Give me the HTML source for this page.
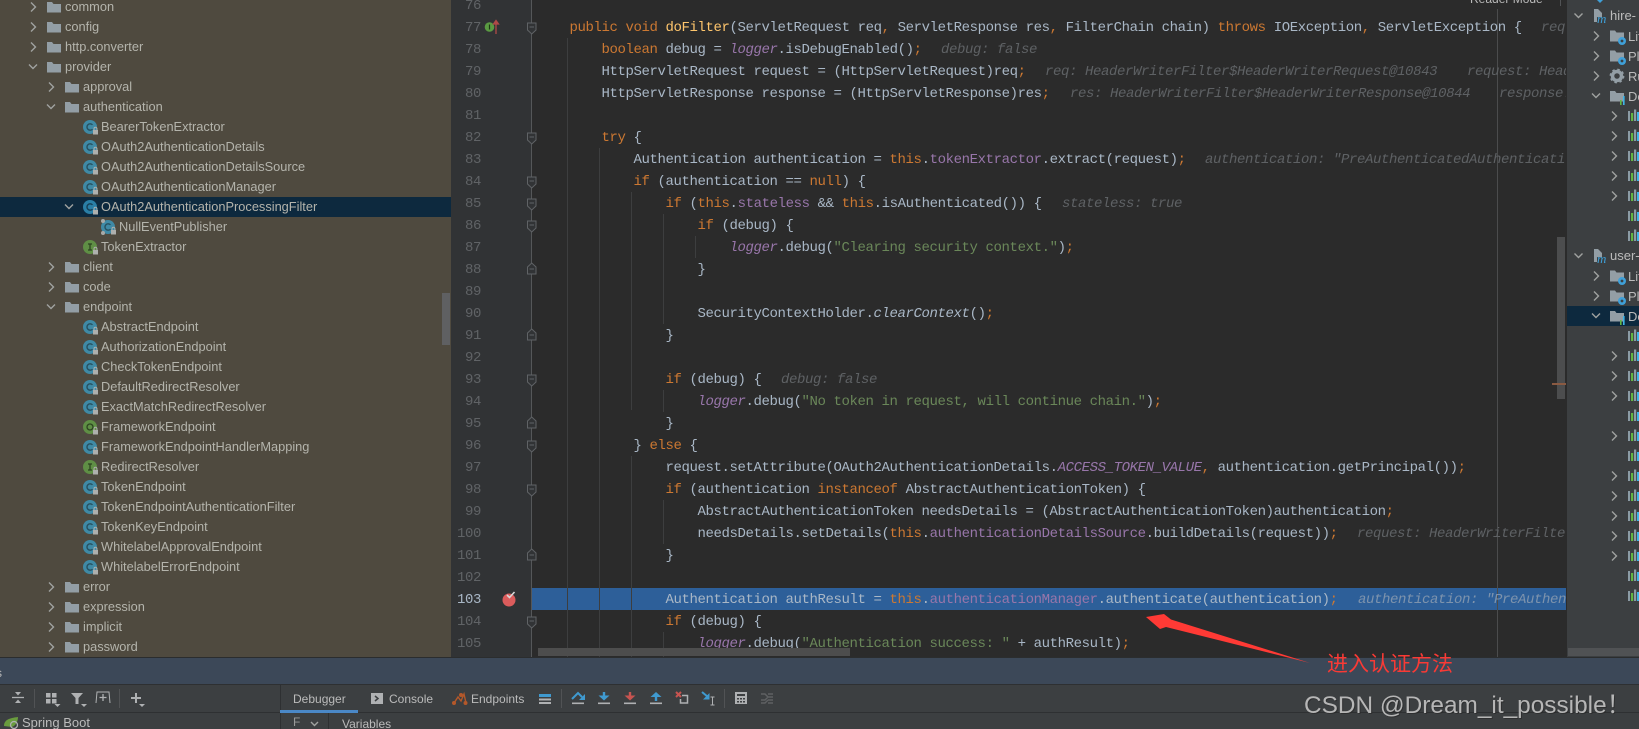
<!DOCTYPE html>
<html lang="en"><head><meta charset="utf-8"><title>IDE Debugger</title>
<style>
html,body{margin:0;padding:0;background:#3c3f41;width:1639px;height:729px;overflow:hidden}
svg{display:block;filter:blur(.3px)}
.c text,.c{font-family:"Liberation Mono",monospace;font-size:14px;letter-spacing:-.4px;fill:#a9b7c6}
.c text{transform:translateY(-1px)}
.k{fill:#cc7832}.f{fill:#9876aa}.s{fill:#6a8759}.m{fill:#ffc66d}.i{font-style:italic}
.c text.h{fill:#5e6164;font-style:italic}
.n{font-family:"Liberation Mono",monospace;font-size:14px;letter-spacing:-.4px;fill:#606366;text-anchor:end;transform:translateY(-1px)}
.t{font-family:"Liberation Sans",sans-serif;font-size:12.8px;fill:#b4b4ac;transform:translateY(-1px)}
.u{font-family:"Liberation Sans",sans-serif;font-size:12px;fill:#bbbbbb}
.r{font-family:"Liberation Sans",sans-serif;font-size:13px;fill:#bbbbbb}
.ch{fill:none;stroke:#a0a2a0;stroke-width:1.4}
.g{stroke:#3d3e3f;stroke-width:1}
</style></head><body>
<svg xmlns="http://www.w3.org/2000/svg" width="1639" height="729" viewBox="0 0 1639 729">
<defs>
<clipPath id="ed"><rect x="532" y="0" width="1034" height="657"/></clipPath>
<clipPath id="tr"><rect x="0" y="0" width="451" height="657"/></clipPath>
<g id="fd"><path d="M527.5,-4h8.5v7l-4.25,4l-4.25,-4z" fill="#313335" stroke="#606366"/><path d="M529.5,0h4.5" stroke="#606366"/></g>
<g id="fe"><path d="M527.5,5h8.5v-7l-4.25,-4l-4.25,4z" fill="#313335" stroke="#606366"/><path d="M529.5,0h4.5" stroke="#606366"/></g>
<path id="cr" class="ch" d="M-2,-4.5l4.5,4.5l-4.5,4.5"/>
<path id="cd" class="ch" d="M-4,-2.5l4,4l4,-4"/>
<path id="fo" d="M-7,-5h5l1.5,2h7.5v8.5h-14z" fill="#939ea5"/>
<g id="lk"><rect x="3" y="3" width="5" height="4.5" fill="#aeb0ae"/><path d="M4,3v-1.2a1.5,1.5 0 0 1 3,0v1.2" fill="none" stroke="#aeb0ae"/></g>
<g id="cl"><circle r="7" fill="#3f8aa6"/><path d="M2.5,-2.2a3.2,3.2 0 1 0 0,4.4" fill="none" stroke="#26505f" stroke-width="1.4"/><use href="#lk"/></g>
<g id="cs"><circle r="7" fill="#2a7fa6"/><path d="M2.5,-2.2a3.2,3.2 0 1 0 0,4.4" fill="none" stroke="#163f55" stroke-width="1.4"/><use href="#lk"/></g>
<g id="in"><circle r="7" fill="#5f8f45"/><path d="M-2,-3h4M0,-3v6M-2,3h4" fill="none" stroke="#2c4420" stroke-width="1.3"/><use href="#lk"/></g>
<g id="an"><circle r="7" fill="#5f8f45"/><circle r="3" fill="none" stroke="#2c4420" stroke-width="1.3"/><use href="#lk"/></g>
<g id="bar"><path d="M0,-5h2v10h-2z" fill="#8b9ba5"/><path d="M3,-3h2.2v8h-2.2z" fill="#62b543"/><path d="M6,-6.5h2.2v11.5h-2.2z" fill="#8b9ba5"/><path d="M9,-4h3v9h-3z" fill="#3fb5e8"/></g>
<g id="lf"><path d="M-7,-5.5h5l1.5,2h7.5v9h-14z" fill="#939ea5"/><circle cx="5" cy="5" r="4" fill="#3fa0d8"/><circle cx="5" cy="5" r="1.4" fill="#3c3f41"/></g>
<g id="mv"><path d="M0,-7h4l4,4v9h-8z" fill="#939ea5"/><rect x="3" y="1" width="10" height="7" fill="#3c3f41"/><text x="3" y="7" font-family="Liberation Serif,serif" font-style="italic" font-size="13" fill="#3fa0d8">m</text></g>
<path id="dd" d="M-3,0h6l-3,3z" fill="#afb1b3"/>
</defs>

<!-- tree panel -->
<rect x="0" y="0" width="451" height="657" fill="#4f4a3f"/>
<rect x="0" y="197" width="451" height="20" fill="#0d293e"/>
<g clip-path="url(#tr)">
<rect x="442" y="293" width="8" height="52" fill="#5f6062"/>
<use href="#cr" x="33" y="7"/><use href="#fo" x="54" y="7"/><text class="t" x="65" y="12">common</text>
<use href="#cr" x="33" y="27"/><use href="#fo" x="54" y="27"/><text class="t" x="65" y="32">config</text>
<use href="#cr" x="33" y="47"/><use href="#fo" x="54" y="47"/><text class="t" x="65" y="52">http.converter</text>
<use href="#cd" x="33" y="67"/><use href="#fo" x="54" y="67"/><text class="t" x="65" y="72">provider</text>
<use href="#cr" x="51" y="87"/><use href="#fo" x="72" y="87"/><text class="t" x="83" y="92">approval</text>
<use href="#cd" x="51" y="107"/><use href="#fo" x="72" y="107"/><text class="t" x="83" y="112">authentication</text>
<use href="#cl" x="90" y="127"/><text class="t" x="101" y="132">BearerTokenExtractor</text>
<use href="#cl" x="90" y="147"/><text class="t" x="101" y="152">OAuth2AuthenticationDetails</text>
<use href="#cl" x="90" y="167"/><text class="t" x="101" y="172">OAuth2AuthenticationDetailsSource</text>
<use href="#cl" x="90" y="187"/><text class="t" x="101" y="192">OAuth2AuthenticationManager</text>
<use href="#cd" x="69" y="207"/><use href="#cs" x="90" y="207"/><text class="t" x="101" y="212">OAuth2AuthenticationProcessingFilter</text>
<use href="#cl" x="108" y="227"/><circle cx="103" cy="221" r="2" fill="#a8aaa8"/><circle cx="103" cy="233" r="2" fill="#a8aaa8"/><text class="t" x="119" y="232">NullEventPublisher</text>
<use href="#in" x="90" y="247"/><text class="t" x="101" y="252">TokenExtractor</text>
<use href="#cr" x="51" y="267"/><use href="#fo" x="72" y="267"/><text class="t" x="83" y="272">client</text>
<use href="#cr" x="51" y="287"/><use href="#fo" x="72" y="287"/><text class="t" x="83" y="292">code</text>
<use href="#cd" x="51" y="307"/><use href="#fo" x="72" y="307"/><text class="t" x="83" y="312">endpoint</text>
<use href="#cl" x="90" y="327"/><text class="t" x="101" y="332">AbstractEndpoint</text>
<use href="#cl" x="90" y="347"/><text class="t" x="101" y="352">AuthorizationEndpoint</text>
<use href="#cl" x="90" y="367"/><text class="t" x="101" y="372">CheckTokenEndpoint</text>
<use href="#cl" x="90" y="387"/><text class="t" x="101" y="392">DefaultRedirectResolver</text>
<use href="#cl" x="90" y="407"/><text class="t" x="101" y="412">ExactMatchRedirectResolver</text>
<use href="#an" x="90" y="427"/><text class="t" x="101" y="432">FrameworkEndpoint</text>
<use href="#cl" x="90" y="447"/><text class="t" x="101" y="452">FrameworkEndpointHandlerMapping</text>
<use href="#in" x="90" y="467"/><text class="t" x="101" y="472">RedirectResolver</text>
<use href="#cl" x="90" y="487"/><text class="t" x="101" y="492">TokenEndpoint</text>
<use href="#cl" x="90" y="507"/><text class="t" x="101" y="512">TokenEndpointAuthenticationFilter</text>
<use href="#cl" x="90" y="527"/><text class="t" x="101" y="532">TokenKeyEndpoint</text>
<use href="#cl" x="90" y="547"/><text class="t" x="101" y="552">WhitelabelApprovalEndpoint</text>
<use href="#cl" x="90" y="567"/><text class="t" x="101" y="572">WhitelabelErrorEndpoint</text>
<use href="#cr" x="51" y="587"/><use href="#fo" x="72" y="587"/><text class="t" x="83" y="592">error</text>
<use href="#cr" x="51" y="607"/><use href="#fo" x="72" y="607"/><text class="t" x="83" y="612">expression</text>
<use href="#cr" x="51" y="627"/><use href="#fo" x="72" y="627"/><text class="t" x="83" y="632">implicit</text>
<use href="#cr" x="51" y="647"/><use href="#fo" x="72" y="647"/><text class="t" x="83" y="652">password</text>
</g>

<!-- gutter -->
<rect x="451" y="0" width="81" height="657" fill="#313335"/>
<path d="M531.5,0V657" stroke="#555759"/>
<g>
<text class="n" x="481" y="10">76</text><text class="n" x="481" y="32">77</text><text class="n" x="481" y="54">78</text><text class="n" x="481" y="76">79</text><text class="n" x="481" y="98">80</text><text class="n" x="481" y="120">81</text><text class="n" x="481" y="142">82</text><text class="n" x="481" y="164">83</text><text class="n" x="481" y="186">84</text><text class="n" x="481" y="208">85</text><text class="n" x="481" y="230">86</text><text class="n" x="481" y="252">87</text><text class="n" x="481" y="274">88</text><text class="n" x="481" y="296">89</text><text class="n" x="481" y="318">90</text><text class="n" x="481" y="340">91</text><text class="n" x="481" y="362">92</text><text class="n" x="481" y="384">93</text><text class="n" x="481" y="406">94</text><text class="n" x="481" y="428">95</text><text class="n" x="481" y="450">96</text><text class="n" x="481" y="472">97</text><text class="n" x="481" y="494">98</text><text class="n" x="481" y="516">99</text><text class="n" x="481" y="538">100</text><text class="n" x="481" y="560">101</text><text class="n" x="481" y="582">102</text><text class="n" x="481" y="604" style="fill:#a9b7c6">103</text><text class="n" x="481" y="626">104</text><text class="n" x="481" y="648">105</text>
</g>
<circle cx="489.5" cy="27" r="4.8" fill="#5a9a42"/><path d="M489.5,24.5v5" stroke="#1d3a14" stroke-width="1.2"/>
<path d="M496,34V22M493.5,24l2.5,-3.5l2.5,3.5z" stroke="#b04a47" stroke-width="1.3" fill="#b04a47"/>
<circle cx="509" cy="600" r="6.5" fill="#db5c5c"/><path d="M507,595l2.5,2.5l5,-5.5" fill="none" stroke="#d8d8d8" stroke-width="1.6"/>

<!-- editor -->
<rect x="532" y="0" width="1035" height="657" fill="#2b2b2b"/>
<rect x="532" y="588" width="1034" height="22" fill="#2d5f99"/>
<path d="M531.5,0V657" stroke="#555759"/>
<path class="g" d="M567.5,38V657M599.5,148V657M631.5,192V410M631.5,456V657M663.5,214V324M663.5,390V412M663.5,500V544M663.5,632V657M695.5,236V258"/>
<path d="M1497.5,9V657" stroke="#4b4c4d"/>
<use href="#fd" y="27"/><use href="#fd" y="137"/><use href="#fd" y="181"/><use href="#fd" y="203"/><use href="#fd" y="225"/><use href="#fe" y="269"/><use href="#fe" y="335"/><use href="#fd" y="379"/><use href="#fe" y="423"/><use href="#fd" y="445"/><use href="#fd" y="489"/><use href="#fe" y="555"/><use href="#fd" y="621"/>
<text class="u" x="1470" y="3" fill="#aaa">Reader Mode</text>
<path d="M1560.5,0V6" stroke="#515355"/>

<g class="c" clip-path="url(#ed)">
<text x="569.5" y="32"><tspan class="k">public void</tspan> <tspan class="m">doFilter</tspan>(ServletRequest req<tspan class="k">,</tspan> ServletResponse res<tspan class="k">,</tspan> FilterChain chain) <tspan class="k">throws</tspan> IOException<tspan class="k">,</tspan> ServletException {</text><text class="h" x="1541" y="32">req</text>
<text x="601.5" y="54"><tspan class="k">boolean</tspan> debug = <tspan class="f i">logger</tspan>.isDebugEnabled()<tspan class="k">;</tspan></text><text class="h" x="941" y="54">debug: false</text>
<text x="601.5" y="76">HttpServletRequest request = (HttpServletRequest)req<tspan class="k">;</tspan></text><text class="h" x="1045" y="76">req: HeaderWriterFilter$HeaderWriterRequest@10843</text><text class="h" x="1467" y="76">request: Head</text>
<text x="601.5" y="98">HttpServletResponse response = (HttpServletResponse)res<tspan class="k">;</tspan></text><text class="h" x="1070" y="98">res: HeaderWriterFilter$HeaderWriterResponse@10844</text><text class="h" x="1499" y="98">response:</text>
<text x="601.5" y="142"><tspan class="k">try</tspan> {</text>
<text x="633.5" y="164">Authentication authentication = <tspan class="k">this</tspan>.<tspan class="f">tokenExtractor</tspan>.extract(request)<tspan class="k">;</tspan></text><text class="h" x="1205" y="164">authentication: "PreAuthenticatedAuthenticati</text>
<text x="633.5" y="186"><tspan class="k">if</tspan> (authentication == <tspan class="k">null</tspan>) {</text>
<text x="665.5" y="208"><tspan class="k">if</tspan> (<tspan class="k">this</tspan>.<tspan class="f">stateless</tspan> &amp;&amp; <tspan class="k">this</tspan>.isAuthenticated()) {</text><text class="h" x="1062" y="208">stateless: true</text>
<text x="697.5" y="230"><tspan class="k">if</tspan> (debug) {</text>
<text x="729.5" y="252"><tspan class="f i">logger</tspan>.debug(<tspan class="s">"Clearing security context."</tspan>)<tspan class="k">;</tspan></text>
<text x="697.5" y="274">}</text>
<text x="697.5" y="318">SecurityContextHolder.<tspan class="i">clearContext</tspan>()<tspan class="k">;</tspan></text>
<text x="665.5" y="340">}</text>
<text x="665.5" y="384"><tspan class="k">if</tspan> (debug) {</text><text class="h" x="781" y="384">debug: false</text>
<text x="697.5" y="406"><tspan class="f i">logger</tspan>.debug(<tspan class="s">"No token in request, will continue chain."</tspan>)<tspan class="k">;</tspan></text>
<text x="665.5" y="428">}</text>
<text x="633.5" y="450">} <tspan class="k">else</tspan> {</text>
<text x="665.5" y="472">request.setAttribute(OAuth2AuthenticationDetails.<tspan class="f i">ACCESS_TOKEN_VALUE</tspan><tspan class="k">,</tspan> authentication.getPrincipal())<tspan class="k">;</tspan></text>
<text x="665.5" y="494"><tspan class="k">if</tspan> (authentication <tspan class="k">instanceof</tspan> AbstractAuthenticationToken) {</text>
<text x="697.5" y="516">AbstractAuthenticationToken needsDetails = (AbstractAuthenticationToken)authentication<tspan class="k">;</tspan></text>
<text x="697.5" y="538">needsDetails.setDetails(<tspan class="k">this</tspan>.<tspan class="f">authenticationDetailsSource</tspan>.buildDetails(request))<tspan class="k">;</tspan></text><text class="h" x="1357" y="538">request: HeaderWriterFilte</text>
<text x="665.5" y="560">}</text>
<text x="665.5" y="604">Authentication authResult = <tspan class="k">this</tspan>.<tspan class="f">authenticationManager</tspan>.authenticate(authentication)<tspan class="k">;</tspan></text><text class="h" x="1358" y="604" style="fill:#7d93ad">authentication: "PreAuthen</text>
<text x="665.5" y="626"><tspan class="k">if</tspan> (debug) {</text>
<text x="697.5" y="648"><tspan class="f i">logger</tspan>.debug(<tspan class="s">"Authentication success: "</tspan> + authResult)<tspan class="k">;</tspan></text>
</g>
<rect x="1557" y="237" width="8" height="162" fill="#4c4d4e"/>
<rect x="1552" y="383" width="14" height="2" fill="#8a5a42"/>
<rect x="538" y="648" width="312" height="8" fill="#4d4d4d"/>

<!-- right panel -->
<rect x="1567" y="0" width="72" height="657" fill="#3c3f41"/>
<rect x="1567" y="306" width="72" height="20" fill="#0d293e"/>
<rect x="1568" y="648" width="71" height="8" fill="#505254"/>
<path d="M1597,0l3,3l3,-3z" fill="#3fa0d8"/>
<use href="#cd" x="1578.5" y="16"/><use href="#mv" x="1594" y="16"/><text class="r" x="1610" y="20">hire-</text>
<use href="#cr" x="1596" y="36"/><use href="#lf" x="1617" y="36"/><text class="r" x="1628" y="41">Lifecycle</text>
<use href="#cr" x="1596" y="56"/><use href="#lf" x="1617" y="56"/><text class="r" x="1628" y="61">Plugins</text>
<use href="#cr" x="1596" y="76"/><circle cx="1617" cy="76" r="4.5" fill="none" stroke="#939ea5" stroke-width="3.5"/><circle cx="1617" cy="76" r="6.6" fill="none" stroke="#939ea5" stroke-width="1.6" stroke-dasharray="2.5 2.7"/><text class="r" x="1628" y="81">Run</text>
<use href="#cd" x="1596" y="96"/><use href="#fo" x="1617" y="96"/><path d="M1620,100h1.6v5h-1.6z" fill="#62b543"/><path d="M1623,96h1.6v9h-1.6z" fill="#3fb5e8"/><text class="r" x="1628" y="101">De</text>
<use href="#cr" x="1614" y="116"/><use href="#bar" x="1628" y="116"/>
<use href="#cr" x="1614" y="136"/><use href="#bar" x="1628" y="136"/>
<use href="#cr" x="1614" y="156"/><use href="#bar" x="1628" y="156"/>
<use href="#cr" x="1614" y="176"/><use href="#bar" x="1628" y="176"/>
<use href="#cr" x="1614" y="196"/><use href="#bar" x="1628" y="196"/>
<use href="#bar" x="1628" y="216"/><use href="#bar" x="1628" y="236"/>
<use href="#cd" x="1578.5" y="256"/><use href="#mv" x="1594" y="256"/><text class="r" x="1610" y="260">user-</text>
<use href="#cr" x="1596" y="276"/><use href="#lf" x="1617" y="276"/><text class="r" x="1628" y="281">Lifecycle</text>
<use href="#cr" x="1596" y="296"/><use href="#lf" x="1617" y="296"/><text class="r" x="1628" y="301">Plugins</text>
<use href="#cd" x="1596" y="316"/><use href="#fo" x="1617" y="316"/><path d="M1620,320h1.6v5h-1.6z" fill="#62b543"/><path d="M1623,316h1.6v9h-1.6z" fill="#3fb5e8"/><text class="r" x="1628" y="321">De</text>
<use href="#bar" x="1628" y="336"/>
<use href="#cr" x="1614" y="356"/><use href="#bar" x="1628" y="356"/>
<use href="#cr" x="1614" y="376"/><use href="#bar" x="1628" y="376"/>
<use href="#cr" x="1614" y="396"/><use href="#bar" x="1628" y="396"/>
<use href="#bar" x="1628" y="416"/>
<use href="#cr" x="1614" y="436"/><use href="#bar" x="1628" y="436"/>
<use href="#bar" x="1628" y="456"/>
<use href="#cr" x="1614" y="476"/><use href="#bar" x="1628" y="476"/>
<use href="#cr" x="1614" y="496"/><use href="#bar" x="1628" y="496"/>
<use href="#cr" x="1614" y="516"/><use href="#bar" x="1628" y="516"/>
<use href="#cr" x="1614" y="536"/><use href="#bar" x="1628" y="536"/>
<use href="#cr" x="1614" y="556"/><use href="#bar" x="1628" y="556"/>
<use href="#bar" x="1628" y="576"/><use href="#bar" x="1628" y="596"/>

<!-- bottom -->
<rect x="0" y="657" width="1639" height="27" fill="#3c4858"/>
<rect x="0" y="657" width="1639" height="1" fill="#2b2d2e"/>
<rect x="0" y="684" width="1639" height="45" fill="#3c3f41"/>
<rect x="0" y="684" width="1639" height="1" fill="#2e3032"/>
<rect x="0" y="712" width="1639" height="1" fill="#2e3032"/>
<text class="u" x="-4" y="677">s</text>
<rect x="280" y="684" width="1" height="45" fill="#2e3032"/>
<rect x="328" y="713" width="1" height="16" fill="#2e3032"/>

<!-- left toolbar -->
<path d="M12,697.5h12" stroke="#afb1b3" stroke-width="1.3"/><path d="M15,692h6l-3,3.5zM15,703h6l-3,-3.5z" fill="#afb1b3"/>
<rect x="34" y="689" width="1" height="19" fill="#515355"/>
<path d="M46,693h4.5v4.5h-4.5zM52,693h4.5v4.5h-4.5zM46,699h4.5v4.5h-4.5zM52,699h4.5v4.5h-4.5z" fill="#afb1b3"/><use href="#dd" x="57.5" y="704"/>
<path d="M71,693h12l-4.5,5v6h-3v-6z" fill="#afb1b3"/><use href="#dd" x="84" y="704"/>
<path d="M96,703l1,-11h12l1,11" fill="none" stroke="#afb1b3"/><path d="M103,694v7M99.5,697.5h7" stroke="#afb1b3" stroke-width="1.3"/>
<rect x="119" y="689" width="1" height="19" fill="#515355"/>
<path d="M136,693v10M131,698h10" stroke="#afb1b3" stroke-width="2"/><use href="#dd" x="142" y="704"/>
<path d="M4,726c0,-6 5,-8 14,-9c0,5 -3,9 -6,10z" fill="#6a9c3e"/><circle cx="14" cy="725" r="3.5" fill="none" stroke="#afb1b3" stroke-width="1.3"/>
<text class="r" x="22" y="727">Spring Boot</text>

<!-- tabs -->
<text class="u" x="293" y="703">Debugger</text>
<rect x="280" y="710" width="78" height="3" fill="#4a88c7"/>
<rect x="371" y="693" width="12" height="11" fill="#afb1b3"/><path d="M375,696l3,2.5l-3,2.5" fill="none" stroke="#3c3f41" stroke-width="1.5"/>
<text class="u" x="389" y="703">Console</text>
<path d="M454,703l4,-6l3,4l3,-7l2,9" fill="none" stroke="#b4582a" stroke-width="1.4"/><circle cx="454" cy="703" r="2" fill="#b4582a"/><circle cx="461" cy="695" r="2" fill="#b4582a"/><circle cx="465.5" cy="703" r="2" fill="#b4582a"/>
<text class="u" x="471" y="703">Endpoints</text>
<path d="M539,694h12v3h-12z" fill="#3f9ad0"/><path d="M539,698.5h12v2h-12zM539,702h12v2h-12z" fill="#afb1b3"/>
<rect x="561" y="689" width="1" height="19" fill="#515355"/>
<text class="u" x="293" y="726" style="fill:#999">F</text><path d="M311,722l3.5,3.5l3.5,-3.5" class="ch"/>
<text class="u" x="342" y="728">Variables</text>

<!-- step icons -->
<path d="M572,699l6,-6l4,4" fill="none" stroke="#3f9ad0" stroke-width="2"/><path d="M585,694v6h-6z" fill="#3f9ad0"/><rect x="572" y="702.5" width="12" height="1.6" fill="#afb1b3"/>
<path d="M604,692v5" stroke="#3f9ad0" stroke-width="2.4"/><path d="M598.5,695.5h11l-5.5,5z" fill="#3f9ad0"/><rect x="598" y="702.5" width="12" height="1.6" fill="#afb1b3"/>
<path d="M630,692v5" stroke="#c75450" stroke-width="2.4"/><path d="M624.5,695.5h11l-5.5,5z" fill="#c75450"/><rect x="624" y="702.5" width="12" height="1.6" fill="#afb1b3"/>
<path d="M656,695v6" stroke="#3f9ad0" stroke-width="2.4"/><path d="M650.5,697h11l-5.5,-5z" fill="#3f9ad0"/><rect x="650" y="702.5" width="12" height="1.6" fill="#afb1b3"/>
<path d="M676,692l5,5M681,692l-5,5" stroke="#c75450" stroke-width="2"/><path d="M682,695.5h5.5v7.5h-7v-4" fill="none" stroke="#afb1b3" stroke-width="1.5"/>
<path d="M702,692l6,5" stroke="#3f9ad0" stroke-width="2"/><path d="M709.5,693v6.5h-6.5z" fill="#3f9ad0"/><path d="M712.5,697v8M710.5,697h4M710.5,705h4" stroke="#afb1b3"/>
<rect x="724" y="689" width="1" height="19" fill="#515355"/>
<rect x="735" y="692" width="12" height="12" fill="#afb1b3"/><path d="M737,694h8v2h-8z" fill="#3c3f41"/><path d="M737,698h2v1.5h-2zM740,698h2v1.5h-2zM743,698h2v1.5h-2zM737,701h2v1.5h-2zM740,701h2v1.5h-2zM743,701h2v1.5h-2z" fill="#3c3f41"/>
<path d="M761,694h4l3,3h5M761,700h4l3,-3M768,700h5M761,703h4l3,-3M768,694h5M768,703h5" fill="none" stroke="#5f6163" stroke-width="1.4"/>

<!-- annotation -->
<path d="M1146,617L1164,614L1171,619.5L1310,663L1166,627L1160,629Z" fill="#ff3a35"/>
<text x="1327" y="671" font-family="'Liberation Sans','Noto Sans CJK SC',sans-serif" font-size="21" fill="#f93a35">进入认证方法</text>
<text x="1305" y="714" font-family="'Liberation Sans','Noto Sans CJK SC',sans-serif" font-size="24.4" fill="#262626" opacity=".6">CSDN @Dream_it_possible！</text>
<text x="1304" y="713" font-family="'Liberation Sans','Noto Sans CJK SC',sans-serif" font-size="24.4" fill="#b6b6b6">CSDN @Dream_it_possible！</text>
</svg>
</body></html>
